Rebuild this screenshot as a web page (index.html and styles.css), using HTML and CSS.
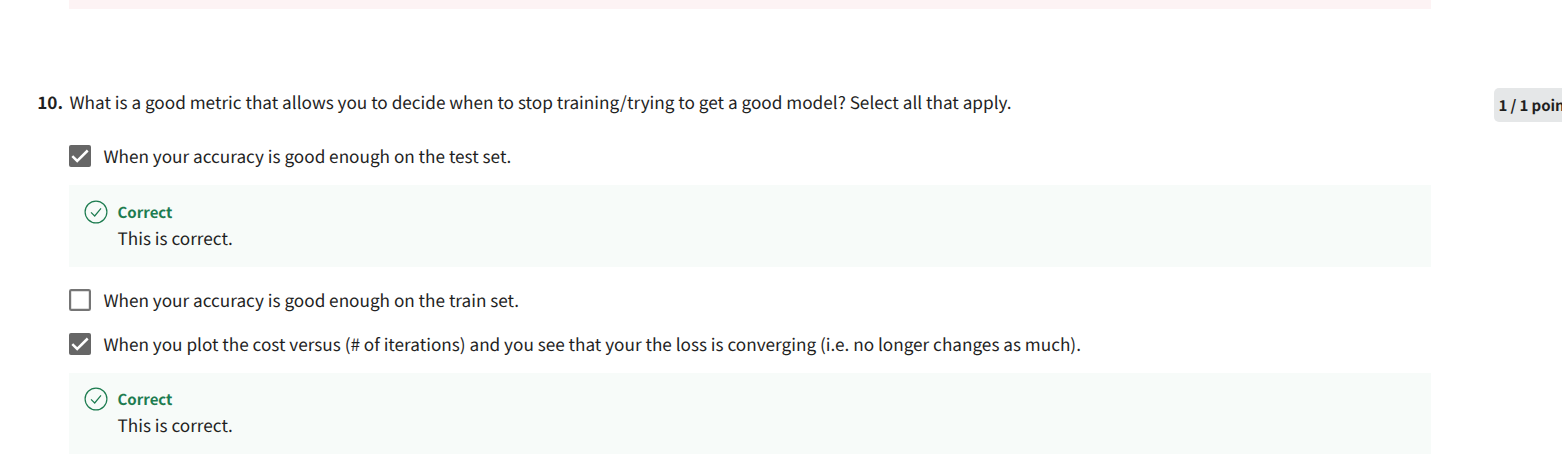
FILE: index.html
```html
<!DOCTYPE html>
<html lang="en">
<head>
<meta charset="utf-8">
<title>Quiz feedback</title>
<link rel="stylesheet" href="styles.css">
</head>
<body>
<svg class="defs" aria-hidden="true">
  <symbol id="checked" viewBox="0 0 22 22"><rect width="22" height="22" rx="2" fill="#666"/><path d="M3.3 11.1l4.9 4.9L18.7 5.5" fill="none" stroke="#fff" stroke-width="2.5"/></symbol>
  <symbol id="unchecked" viewBox="0 0 22 22"><rect x="1.1" y="1.1" width="19.8" height="19.8" rx="1.2" fill="#fff" stroke="#757575" stroke-width="2.2"/></symbol>
  <symbol id="correct" viewBox="0 0 24 24"><g fill="none" stroke="#1d7c50" stroke-width="1.2"><circle cx="12" cy="12" r="10.9"/><path d="M7 12.4l3.7 3.6 6.3-7.7"/></g></symbol>
</svg>
<main class="quiz">
  <div class="incorrect-feedback"></div>
  <section class="question">
    <div class="number">10.</div>
    <div class="content">
      <p class="prompt">What is a good metric that allows you to decide when to stop training/trying to get a good model? Select all that apply.</p>
      <div class="choice"><svg class="box"><use href="#checked"/></svg><span class="label">When your accuracy is good enough on the test set.</span></div>
      <div class="feedback">
        <svg class="status"><use href="#correct"/></svg>
        <div><p class="verdict">Correct</p><p class="detail">This is correct.</p></div>
      </div>
      <div class="choice after-feedback"><svg class="box"><use href="#unchecked"/></svg><span class="label">When your accuracy is good enough on the train set.</span></div>
      <div class="choice"><svg class="box"><use href="#checked"/></svg><span class="label">When you plot the cost versus (# of iterations) and you see that your the loss is converging (i.e. no longer changes as much).</span></div>
      <div class="feedback short">
        <svg class="status"><use href="#correct"/></svg>
        <div><p class="verdict">Correct</p><p class="detail">This is correct.</p></div>
      </div>
    </div>
    <div class="points">1 / 1 point</div>
  </section>
</main>
</body>
</html>
```
FILE: styles.css
```css
* { box-sizing: border-box; }
body { margin: 0; background: #fff; color: #1f1f1f; font: 17.18px/26px "Noto Sans CJK SC", "Open Sans", sans-serif; text-rendering: geometricPrecision; overflow: hidden; }
p { margin: 0; }
.defs { display: none; }
.quiz { width: 1600px; height: 473px; overflow: hidden; }
.incorrect-feedback { width: 1362px; height: 9px; margin-left: 69px; background: #fdf3f4; }
.question { display: flex; align-items: flex-start; padding-top: 79px; }
.number { width: 69px; padding: 1px 6px 0 0; text-align: right; font-weight: 700; flex: none; }
.content { width: 1362px; flex: none; }
.prompt { height: 46px; padding: 1px 0 0 0.5px; font-size: 17.19px; white-space: nowrap; }
.choice { display: flex; align-items: center; gap: 12.5px; height: 44px; white-space: nowrap; }
.box { width: 22px; height: 22px; flex: none; }
.label { padding-bottom: 1px; }
.feedback { display: flex; gap: 9.5px; height: 82px; margin-top: 7px; padding: 14px 15px; background: #f7fbf9; }
.short { height: 81px; padding-top: 13px; }
.after-feedback { margin-top: 11px; }
.status { width: 24px; height: 24px; margin-top: 1px; flex: none; }
.verdict { padding-top: 1px; color: #1d7c50; font-size: 15px; font-weight: 700; line-height: 26px; }
.detail { line-height: 26px; margin-top: -1px; }
.points { margin-left: 63px; height: 34px; padding: 1px 5px 0 4.5px; border-radius: 5px; background: #e5e7e8; font-size: 15px; font-weight: 700; line-height: 34px; letter-spacing: -0.1px; white-space: nowrap; }
```
